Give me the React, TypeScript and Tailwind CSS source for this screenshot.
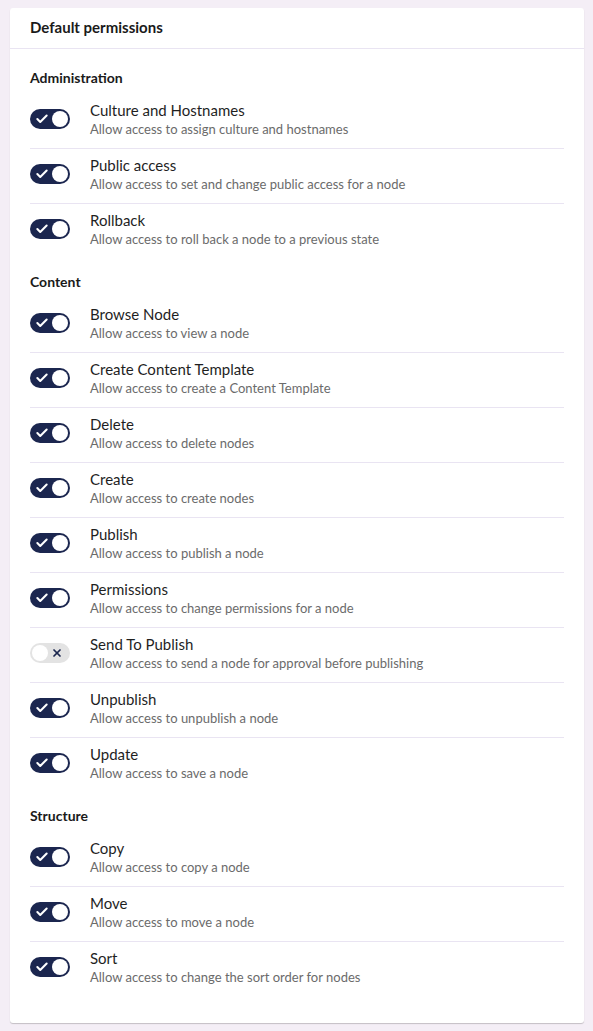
import { Check, X } from 'lucide-react';

type Permission = { name: string; desc: string; on: boolean };

const groups: { title: string; items: Permission[] }[] = [
	{
		title: 'Administration',
		items: [
			{ name: 'Culture and Hostnames', desc: 'Allow access to assign culture and hostnames', on: true },
			{ name: 'Public access', desc: 'Allow access to set and change public access for a node', on: true },
			{ name: 'Rollback', desc: 'Allow access to roll back a node to a previous state', on: true },
		],
	},
	{
		title: 'Content',
		items: [
			{ name: 'Browse Node', desc: 'Allow access to view a node', on: true },
			{ name: 'Create Content Template', desc: 'Allow access to create a Content Template', on: true },
			{ name: 'Delete', desc: 'Allow access to delete nodes', on: true },
			{ name: 'Create', desc: 'Allow access to create nodes', on: true },
			{ name: 'Publish', desc: 'Allow access to publish a node', on: true },
			{ name: 'Permissions', desc: 'Allow access to change permissions for a node', on: true },
			{ name: 'Send To Publish', desc: 'Allow access to send a node for approval before publishing', on: false },
			{ name: 'Unpublish', desc: 'Allow access to unpublish a node', on: true },
			{ name: 'Update', desc: 'Allow access to save a node', on: true },
		],
	},
	{
		title: 'Structure',
		items: [
			{ name: 'Copy', desc: 'Allow access to copy a node', on: true },
			{ name: 'Move', desc: 'Allow access to move a node', on: true },
			{ name: 'Sort', desc: 'Allow access to change the sort order for nodes', on: true },
		],
	},
];

// switch: checkmark + knob when on, knob + cross when off
const Toggle = ({ on }: { on: boolean }) =>
	on ? (
		<div className="flex h-[20px] w-[40px] shrink-0 items-center justify-between rounded-full bg-[#1b264f] pr-[2px] pl-[5px]">
			<Check size={14} strokeWidth={3.5} className="text-white" />
			<span className="h-[16px] w-[16px] rounded-full bg-white" />
		</div>
	) : (
		<div className="flex h-[20px] w-[40px] shrink-0 items-center justify-between rounded-full bg-[#e3e3e3] pr-[7px] pl-[2px]">
			<span className="h-[16px] w-[16px] rounded-full bg-white" />
			<X size={12} strokeWidth={3.5} className="text-[#1b264f]" />
		</div>
	);

export default function App() {
	return (
		<div className="min-h-[1031px] bg-[#f4eef6] pt-[8px] pl-[10px]" style={{ fontFamily: 'Lato, "Open Sans", sans-serif' }}>
			<div className="w-[574px] rounded-[3px] bg-white shadow-[0_1px_1px_rgba(0,0,0,0.2)]">
				<div className="h-[41px] border-b border-[#e9e4f2] px-[20px] pt-[9px] text-[15px] font-bold leading-[20px] text-[#1a1a1a]">
					Default permissions
				</div>
				<div className="px-[20px] pt-[19px] pb-[27px]">
					{groups.map((group, gi) => (
						<div key={group.title} className={gi > 0 ? 'mt-[14px]' : ''}>
							<h3 className="mb-[6px] text-[14px] font-bold leading-[20px] text-[#1a1a1a]">{group.title}</h3>
							{group.items.map((p, i) => (
								<div
									key={p.name}
									className={`flex items-center gap-[20px] pt-[6px] pb-[10px] ${i < group.items.length - 1 ? 'border-b border-[#e9e4f2]' : ''}`}
								>
									<Toggle on={p.on} />
									<div>
										<div className="text-[15px] leading-[20px] text-[#1f1f1f]">{p.name}</div>
										<div className="text-[13px] leading-[18px] text-[#6b6b6b]">{p.desc}</div>
									</div>
								</div>
							))}
						</div>
					))}
				</div>
			</div>
		</div>
	);
}
